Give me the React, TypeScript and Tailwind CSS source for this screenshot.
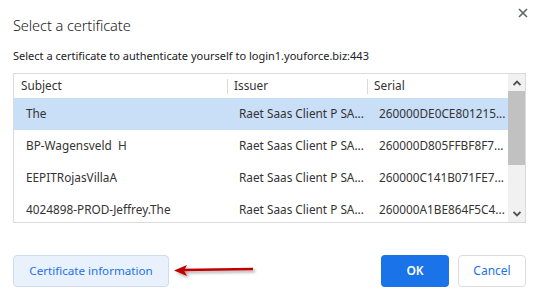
import React from 'react';

interface CertRow {
  subject: string;
  issuer: string;
  serial: string;
}

const rows: CertRow[] = [
  { subject: 'The', issuer: 'Raet Saas Client P SA...', serial: '260000DE0CE801215...' },
  { subject: 'BP-Wagensveld  H', issuer: 'Raet Saas Client P SA...', serial: '260000D805FFBF8F7...' },
  { subject: 'EEPITRojasVillaA', issuer: 'Raet Saas Client P SA...', serial: '260000C141B071FE7...' },
  { subject: '4024898-PROD-Jeffrey.The', issuer: 'Raet Saas Client P SA...', serial: '260000A1BE864F5C4...' },
];

export default function App() {
  return (
    <div
      className="relative w-[539px] h-[293px] bg-white overflow-hidden text-[#202124]"
      style={{ fontFamily: '"Noto Sans", "Open Sans", sans-serif' }}
    >
      {/* Close */}
      <button className="absolute right-[11px] top-[8px] w-[10px] h-[10px] text-[#5f6368]">
        <svg viewBox="0 0 10 10" className="w-[10px] h-[10px]">
          <path d="M1 1 L9 9 M9 1 L1 9" stroke="currentColor" strokeWidth="1.6" />
        </svg>
      </button>

      {/* Header */}
      <div className="px-[13px] pt-[14px]">
        <h1 className="text-[14.6px] leading-[22px] font-light tracking-[-0.1px]">Select a certificate</h1>
        <p className="mt-[12px] text-[11px] leading-[16px]">
          Select a certificate to authenticate yourself to login1.youforce.biz:443
        </p>
      </div>

      {/* Table */}
      <div className="mx-[13px] mt-[9px] w-[513px] h-[150px] border border-[#dadada] flex overflow-hidden">
        <div className="flex-1 flex flex-col text-[11.8px] text-[#333]">
          <div className="h-[24px] shrink-0 flex items-center">
            <div className="w-[213px] pl-[7px]">Subject</div>
            <div className="w-[140px] flex items-center">
              <span className="w-px h-[15px] bg-[#dadada] mr-[6px]" />
              Issuer
            </div>
            <div className="flex-1 flex items-center">
              <span className="w-px h-[15px] bg-[#dadada] mr-[6px]" />
              Serial
            </div>
          </div>
          {rows.map((r, i) => (
            <div
              key={i}
              className={`h-[32px] shrink-0 flex items-center ${i === 0 ? 'bg-[#c9dff8]' : ''}`}
            >
              <div className="w-[213px] pl-[12px] whitespace-pre">{r.subject}</div>
              <div className="w-[140px] pl-[12px] whitespace-nowrap">{r.issuer}</div>
              <div className="flex-1 pl-[12px] whitespace-nowrap">{r.serial}</div>
            </div>
          ))}
        </div>
        {/* Scrollbar */}
        <div className="w-[17px] bg-[#f1f1f1] flex flex-col">
          <div className="h-[17px] flex items-center justify-center text-[#505050]">
            <svg viewBox="0 0 8 6" className="w-[8px] h-[6px]">
              <path d="M0.5 5 L4 1.5 L7.5 5" stroke="currentColor" strokeWidth="1.8" fill="none" />
            </svg>
          </div>
          <div className="h-[74px] bg-[#c1c1c1]" />
          <div className="flex-1" />
          <div className="h-[17px] flex items-center justify-center text-[#505050]">
            <svg viewBox="0 0 8 6" className="w-[8px] h-[6px]">
              <path d="M0.5 1 L4 4.5 L7.5 1" stroke="currentColor" strokeWidth="1.8" fill="none" />
            </svg>
          </div>
        </div>
      </div>

      {/* Footer */}
      <div className="px-[13px] mt-[32px] flex items-center">
        <button className="h-[32px] w-[156px] rounded-[4px] border border-[#cfdcee] bg-[#e9f1fc] text-[#1a73e8] text-[11.6px]">
          Certificate information
        </button>
        <div className="relative ml-[4px] w-[82px] h-[16px]">
          <svg viewBox="0 0 82 16" className="w-[82px] h-[16px] overflow-visible">
            <defs>
              <filter id="sh" x="-20%" y="-50%" width="140%" height="200%">
                <feDropShadow dx="2" dy="2" stdDeviation="1.5" floodColor="#000" floodOpacity="0.35" />
              </filter>
            </defs>
            <g filter="url(#sh)">
              <path d="M10 7 L80 6" stroke="#c00000" strokeWidth="2.5" fill="none" />
              <path d="M1 7.5 L14 2 L11 7.5 L14 13 Z" fill="#c00000" />
            </g>
          </svg>
        </div>
        <div className="flex-1" />
        <button className="h-[32px] w-[68px] rounded-[4px] bg-[#1a73e8] text-white text-[12px] font-semibold">
          OK
        </button>
        <button className="ml-[9px] h-[32px] w-[68px] rounded-[4px] border border-[#dadce0] bg-white text-[#1a73e8] text-[12px]">
          Cancel
        </button>
      </div>
    </div>
  );
}
